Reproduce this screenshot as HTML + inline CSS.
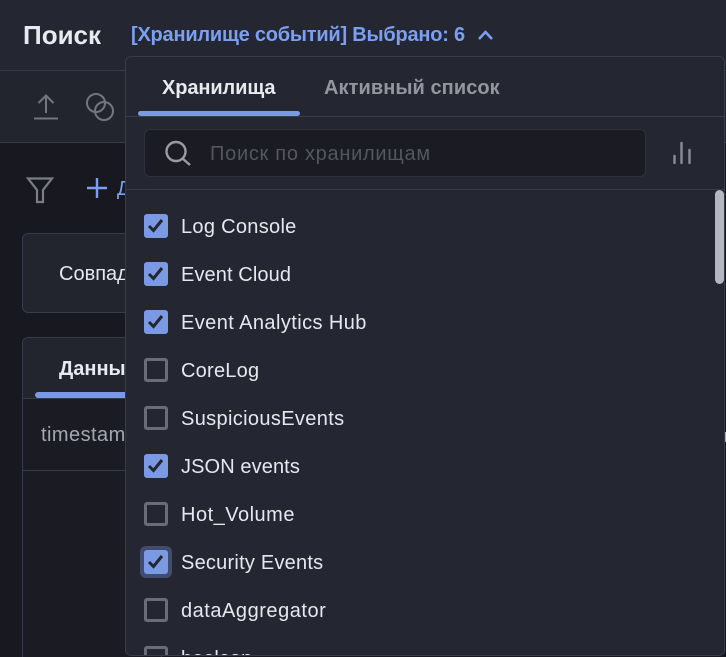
<!DOCTYPE html>
<html style="overflow:hidden;width:726px;height:657px"><head><meta charset="utf-8">
<style>
html,body{margin:0;padding:0}
body{width:726px;height:657px;overflow:hidden;position:relative;background:#171820;font-family:"Liberation Sans",sans-serif}
.a{position:absolute}
.t{position:absolute;white-space:nowrap;line-height:24px}
.l{font-size:20px;color:#e6e8ee;left:181px}
.cb{position:absolute;left:144px;width:24px;height:24px;box-sizing:border-box;border-radius:3px}
.on{background:#7b9ae4}
.off{border:3px solid #6a6d79}
.cb svg{position:absolute;left:0;top:0}
</style></head><body>
<div class="a" style="left:0;top:0;width:726px;height:70px;background:#242631"></div>
<div class="a" style="left:0;top:70px;width:726px;height:1px;background:#383b4a"></div>
<div class="a" style="left:0;top:71px;width:726px;height:71px;background:#22242e"></div>
<div class="a" style="left:0;top:142px;width:726px;height:1px;background:#383b4a"></div>
<div class="t" style="left:23px;top:23px;font-size:26px;font-weight:bold;color:#e8eaf0;letter-spacing:0">Поиск</div>
<div class="t" style="left:131px;top:23px;font-size:20px;font-weight:bold;color:#7ba0f2;letter-spacing:-.22px">[Хранилище событий] Выбрано: 6</div>
<svg class="a" style="left:477px;top:28px" width="18" height="14"><path d="M2 11 L8.500 4 L15 11" fill="none" stroke="#7ba0f2" stroke-width="2.600"/></svg>
<svg class="a" style="left:30px;top:90px" width="90" height="34" fill="none" stroke="#74767f" stroke-width="2"><path d="M4 28.500H28M16 23V6M8.500 13L16 5.500L23.500 13"/><circle cx="66" cy="13" r="9"/><circle cx="74" cy="21" r="9"/></svg>
<svg class="a" style="left:25px;top:175px" width="30" height="30" fill="none" stroke="#7c7e87" stroke-width="2.200"><path d="M3 3.500H27L18 15V27H12V15Z"/></svg>
<svg class="a" style="left:85px;top:176px" width="24" height="24" stroke="#7ba0f2" stroke-width="2.400"><path d="M2 12H22M12 2V22"/></svg>
<div class="t" style="left:117px;top:177px;font-size:20px;color:#7ba0f2">Д</div>
<div class="a" style="left:22px;top:233px;width:140px;height:80px;box-sizing:border-box;background:#22242e;border:1px solid #383b4a;border-radius:6px"></div>
<div class="t" style="left:59px;top:262px;font-size:20px;color:#e6e8ee">Совпадения</div>
<div class="a" style="left:22px;top:337px;width:140px;height:320px;box-sizing:border-box;background:#1a1b23;border:1px solid #383b4a;border-bottom:none;border-radius:6px 6px 0 0"></div>
<div class="a" style="left:23px;top:338px;width:139px;height:60px;background:#22242e;border-radius:6px 0 0 0"></div>
<div class="t" style="left:59px;top:357px;font-size:20px;font-weight:bold;color:#e8eaf0">Данные</div>
<div class="a" style="left:35px;top:392px;width:110px;height:6px;background:#7b9ae4;border-radius:3px"></div>
<div class="a" style="left:23px;top:398px;width:139px;height:1px;background:#383b4a"></div>
<div class="t" style="left:41px;top:423px;font-size:20px;color:#a4a7b2;letter-spacing:.45px">timestamp</div>
<div class="a" style="left:23px;top:470px;width:139px;height:1px;background:#383b4a"></div>
<div class="a" style="left:725px;top:432px;width:1px;height:10px;background:#b0b3bd"></div>
<div class="a" style="left:125px;top:56px;width:600px;height:600px;box-sizing:border-box;background:#242631;border:1px solid #383b4a;border-radius:6px;overflow:hidden">
<div class="a" style="left:0;top:59px;width:598px;height:1px;background:#383b4a"></div>
<div class="a" style="left:0;top:132px;width:598px;height:1px;background:#383b4a"></div>
<div class="a" style="left:12px;top:54px;width:162px;height:5px;background:#7b9ae4;border-radius:3px"></div>
<div class="a" style="left:18px;top:72px;width:502px;height:48px;box-sizing:border-box;background:#1a1b23;border:1px solid #2f313d;border-radius:6px"></div>
<div class="a" style="left:589px;top:133px;width:9px;height:94px;background:#b4b7c0;border-radius:5px"></div>
</div>
<div class="t" style="left:162px;top:76px;font-size:20px;font-weight:bold;color:#e8eaf0;letter-spacing:-.1px">Хранилища</div>
<div class="t" style="left:324px;top:76px;font-size:20px;font-weight:bold;color:#94969f;letter-spacing:.07px">Активный список</div>
<svg class="a" style="left:164px;top:139px" width="28" height="28" fill="none" stroke="#9a9ca5" stroke-width="2.400"><circle cx="12" cy="12.500" r="9.500"/><path d="M18.500 19.500L26 26"/></svg>
<div class="t" style="left:210px;top:142px;font-size:20px;color:#55575f;letter-spacing:.72px">Поиск по хранилищам</div>
<svg class="a" style="left:672px;top:140px" width="20" height="26" stroke="#8c8e97" stroke-width="2.400" stroke-linecap="round"><path d="M2.500 16V23M9.500 3V23M17.500 10V23"/></svg>

<div class="cb on" style="top:214px"><svg width="24" height="24"><path d="M5 12L9.500 16.500L18 6" fill="none" stroke="#23252f" stroke-width="3"/></svg></div>
<div class="t l" style="top:215px;letter-spacing:.3px">Log Console</div>
<div class="cb on" style="top:262px"><svg width="24" height="24"><path d="M5 12L9.500 16.500L18 6" fill="none" stroke="#23252f" stroke-width="3"/></svg></div>
<div class="t l" style="top:263px;letter-spacing:.1px">Event Cloud</div>
<div class="cb on" style="top:310px"><svg width="24" height="24"><path d="M5 12L9.500 16.500L18 6" fill="none" stroke="#23252f" stroke-width="3"/></svg></div>
<div class="t l" style="top:311px;letter-spacing:.42px">Event Analytics Hub</div>
<div class="cb off" style="top:358px"></div>
<div class="t l" style="top:359px;letter-spacing:.24px">CoreLog</div>
<div class="cb off" style="top:406px"></div>
<div class="t l" style="top:407px;letter-spacing:.35px">SuspiciousEvents</div>
<div class="cb on" style="top:454px"><svg width="24" height="24"><path d="M5 12L9.500 16.500L18 6" fill="none" stroke="#23252f" stroke-width="3"/></svg></div>
<div class="t l" style="top:455px;letter-spacing:.1px">JSON events</div>
<div class="cb off" style="top:502px"></div>
<div class="t l" style="top:503px;letter-spacing:.5px">Hot_Volume</div>
<div class="a" style="left:140px;top:546px;width:32px;height:32px;background:#414c6e;border-radius:6px"></div>
<div class="cb on" style="top:550px"><svg width="24" height="24"><path d="M5 12L9.500 16.500L18 6" fill="none" stroke="#23252f" stroke-width="3"/></svg></div>
<div class="t l" style="top:551px;letter-spacing:.23px">Security Events</div>
<div class="cb off" style="top:598px"></div>
<div class="t l" style="top:599px;letter-spacing:.53px">dataAggregator</div>
<div class="a" style="left:126px;top:640px;width:598px;height:15px;overflow:hidden">
<div class="cb off" style="left:18px;top:6px"></div>
<div class="t l" style="left:55px;top:7px">boolean</div>
</div>
</body></html>
